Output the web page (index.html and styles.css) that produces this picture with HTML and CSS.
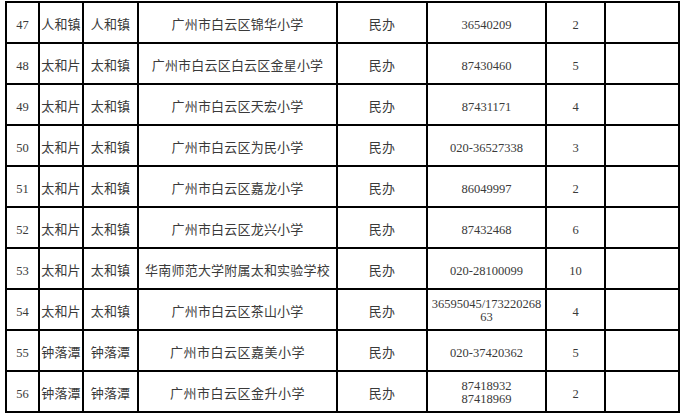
FILE: index.html
```html
<!DOCTYPE html>
<html lang="zh-CN">
<head>
<meta charset="utf-8">
<title>学校名单</title>
<link rel="stylesheet" href="styles.css">
</head>
<body>
<table class="list">
  <colgroup>
    <col class="c1"><col class="c2"><col class="c3"><col class="c4"><col class="c5"><col class="c6"><col class="c7"><col class="c8">
  </colgroup>
  <tbody>
    <tr><td class="num">47</td><td>人和镇</td><td>人和镇</td><td>广州市白云区锦华小学</td><td>民办</td><td class="num">36540209</td><td class="num">2</td><td></td></tr>
    <tr><td class="num">48</td><td>太和片</td><td>太和镇</td><td>广州市白云区白云区金星小学</td><td>民办</td><td class="num">87430460</td><td class="num">5</td><td></td></tr>
    <tr><td class="num">49</td><td>太和片</td><td>太和镇</td><td>广州市白云区天宏小学</td><td>民办</td><td class="num">87431171</td><td class="num">4</td><td></td></tr>
    <tr><td class="num">50</td><td>太和片</td><td>太和镇</td><td>广州市白云区为民小学</td><td>民办</td><td class="num">020-36527338</td><td class="num">3</td><td></td></tr>
    <tr><td class="num">51</td><td>太和片</td><td>太和镇</td><td>广州市白云区嘉龙小学</td><td>民办</td><td class="num">86049997</td><td class="num">2</td><td></td></tr>
    <tr><td class="num">52</td><td>太和片</td><td>太和镇</td><td>广州市白云区龙兴小学</td><td>民办</td><td class="num">87432468</td><td class="num">6</td><td></td></tr>
    <tr><td class="num">53</td><td>太和片</td><td>太和镇</td><td>华南师范大学附属太和实验学校</td><td>民办</td><td class="num">020-28100099</td><td class="num">10</td><td></td></tr>
    <tr><td class="num">54</td><td>太和片</td><td>太和镇</td><td>广州市白云区茶山小学</td><td>民办</td><td class="num two">36595045/173220268<br>63</td><td class="num">4</td><td></td></tr>
    <tr><td class="num">55</td><td>钟落潭</td><td>钟落潭</td><td class="wide">广州市白云区嘉美小学</td><td>民办</td><td class="num">020-37420362</td><td class="num">5</td><td></td></tr>
    <tr><td class="num">56</td><td>钟落潭</td><td>钟落潭</td><td class="wide">广州市白云区金升小学</td><td>民办</td><td class="num two">87418932<br>87418969</td><td class="num">2</td><td></td></tr>
  </tbody>
</table>
</body>
</html>
```
FILE: styles.css
```css
html, body {
  margin: 0;
  padding: 0;
  background: #ffffff;
}

body {
  padding: 1px 0 0 5px;
}

.list {
  border-collapse: separate;
  border-spacing: 0;
  table-layout: fixed;
  width: 675px;
  border-top: 2px solid #000;
  border-left: 2px solid #000;
  font-family: "Liberation Serif", "Noto Sans CJK SC", serif;
  font-size: 13px;
  color: #3a3a3a;
}

.c1 { width: 33px; }
.c2 { width: 44px; }
.c3 { width: 55px; }
.c4 { width: 199px; }
.c5 { width: 90px; }
.c6 { width: 119px; }
.c7 { width: 59px; }
.c8 { width: 74px; }

.list td {
  box-sizing: border-box;
  height: 41px;
  padding: 4px 0 0 0;
  border-right: 2px solid #000;
  border-bottom: 2px solid #000;
  text-align: center;
  vertical-align: middle;
  line-height: 14px;
  white-space: nowrap;
  letter-spacing: 0.2px;
}

.list td.num {
  font-size: 12.5px;
  letter-spacing: 0;
}

.list td.two {
  line-height: 13.5px;
  padding-top: 3px;
}

.list td.wide {
  letter-spacing: 0.5px;
}
```
